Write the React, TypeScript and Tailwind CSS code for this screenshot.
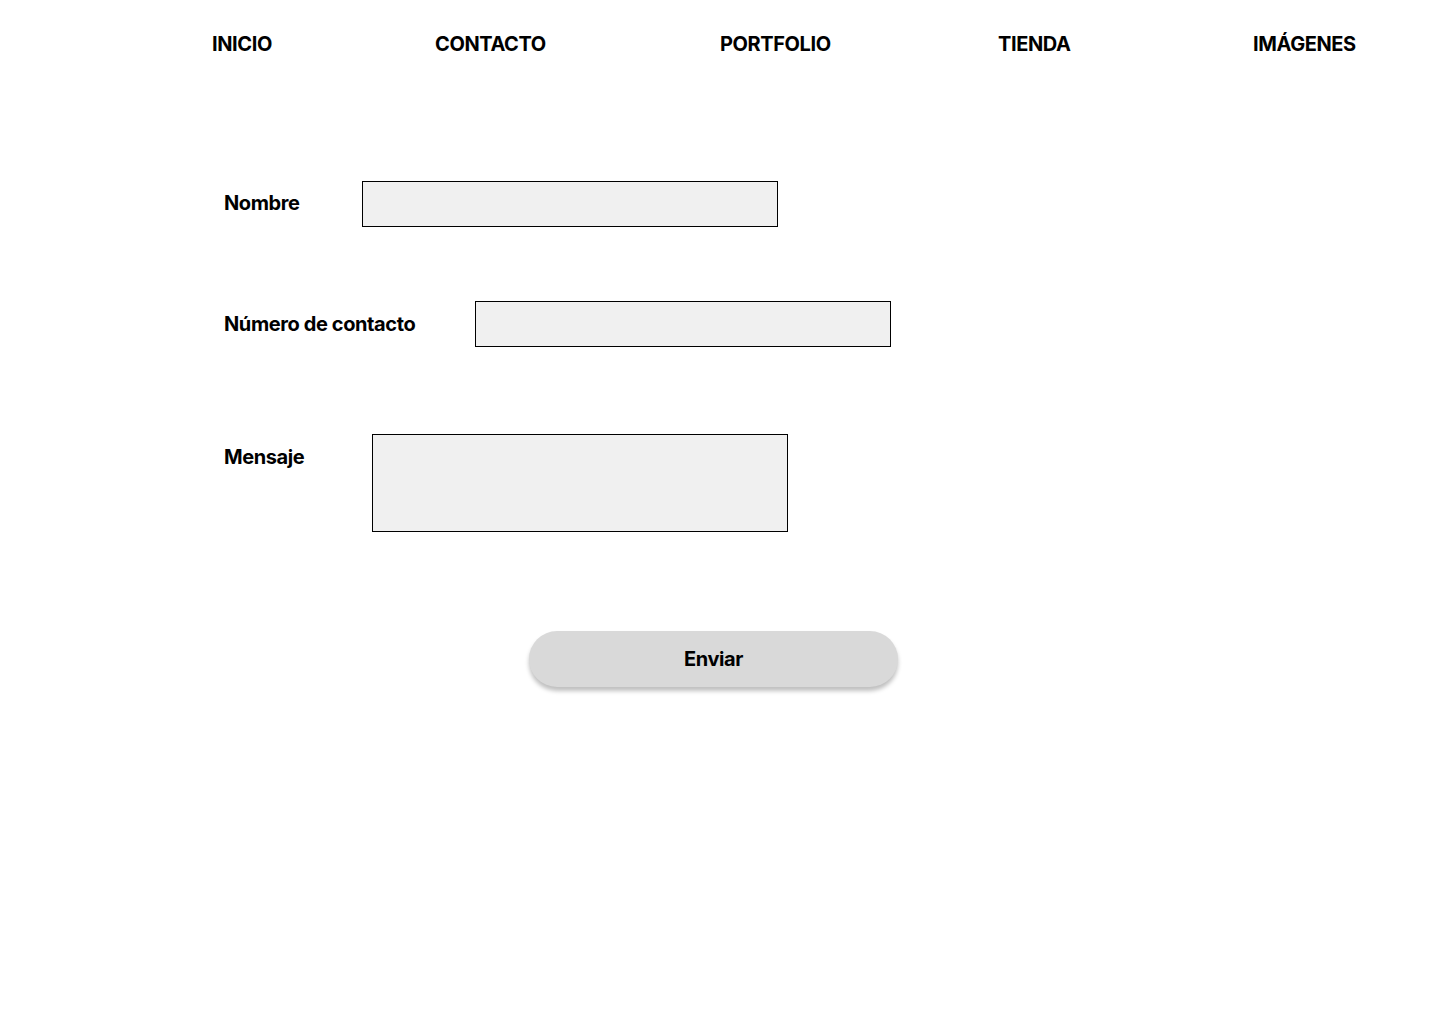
const navItems = [
  { label: 'INICIO', width: 'w-[223px]' },
  { label: 'CONTACTO', width: 'w-[285px]' },
  { label: 'PORTFOLIO', width: 'w-[278px]' },
  { label: 'TIENDA', width: 'w-[255px]' },
  { label: 'IMÁGENES', width: 'w-auto' },
];

const textStyle = "font-['Inter','Liberation_Sans',sans-serif] font-bold tracking-[-0.025em] text-black";

export default function App() {
  return (
    <div className={`min-h-[1024px] w-[1440px] bg-white ${textStyle}`}>
      <nav className="flex h-[88px] items-center pl-[212px] text-[20px]">
        {navItems.map((item) => (
          <a key={item.label} href="#" className={`${item.width} shrink-0 leading-none`}>
            {item.label}
          </a>
        ))}
      </nav>

      <form className="flex flex-col pl-[224px] pt-[93px]">
        <div className="flex items-center">
          <label className="mb-[3px] w-[138px] shrink-0 text-[20px] leading-none">Nombre</label>
          <input
            type="text"
            className="h-[46px] w-[416px] border border-black bg-[#f0f0f0] outline-none"
          />
        </div>

        <div className="mt-[74px] flex items-center">
          <label className="w-[251px] shrink-0 text-[20px] leading-none">Número de contacto</label>
          <input
            type="text"
            className="h-[46px] w-[416px] border border-black bg-[#f0f0f0] outline-none"
          />
        </div>

        <div className="mt-[87px] flex items-start">
          <label className="w-[148px] shrink-0 pt-[13px] text-[20px] leading-none">Mensaje</label>
          <textarea className="h-[98px] w-[416px] resize-none border border-black bg-[#f0f0f0] outline-none" />
        </div>

        <div className="mt-[99px] pl-[305px]">
          <button
            type="button"
            className="h-[56px] w-[369px] rounded-full bg-[#d9d9d9] text-[20px] shadow-[0_4px_4px_rgba(0,0,0,0.25)]"
          >
            Enviar
          </button>
        </div>
      </form>
    </div>
  );
}
